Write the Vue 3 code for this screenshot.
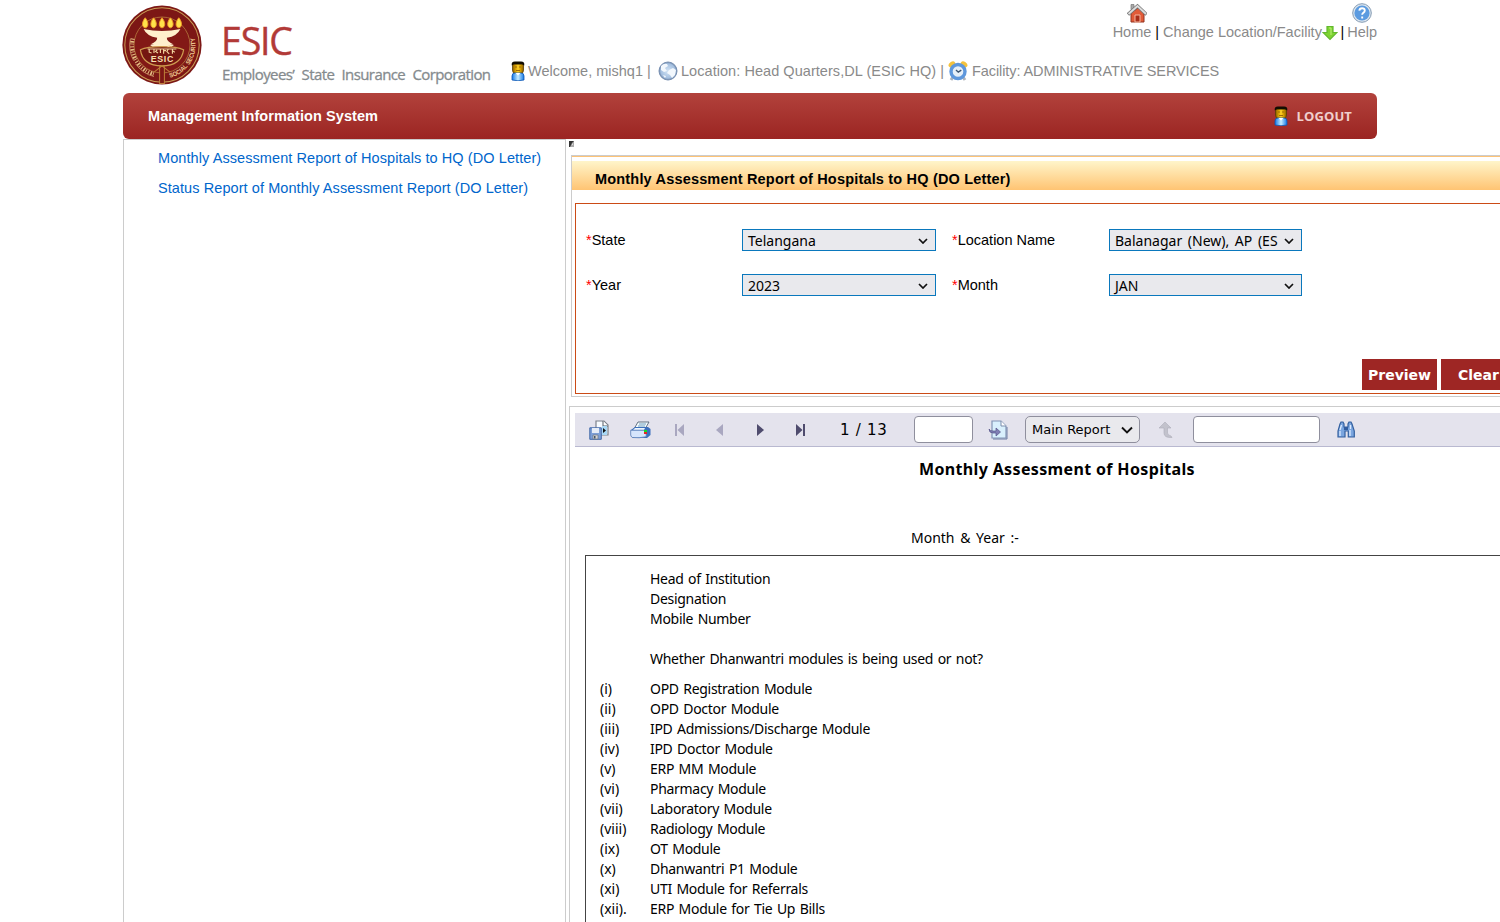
<script setup>
const links = [
  'Monthly Assessment Report of Hospitals to HQ (DO Letter)',
  'Status Report of Monthly Assessment Report (DO Letter)'
]
const fields = [
  { label: 'State', value: 'Telangana' },
  { label: 'Location Name', value: 'Balanagar (New), AP (ES' },
  { label: 'Year', value: '2023' },
  { label: 'Month', value: 'JAN' }
]
const heads = ['Head of Institution', 'Designation', 'Mobile Number']
const modules = [
  ['(i)', 'OPD Registration Module'],
  ['(ii)', 'OPD Doctor Module'],
  ['(iii)', 'IPD Admissions/Discharge Module'],
  ['(iv)', 'IPD Doctor Module'],
  ['(v)', 'ERP MM Module'],
  ['(vi)', 'Pharmacy Module'],
  ['(vii)', 'Laboratory Module'],
  ['(viii)', 'Radiology Module'],
  ['(ix)', 'OT Module'],
  ['(x)', 'Dhanwantri P1 Module'],
  ['(xi)', 'UTI Module for Referrals'],
  ['(xii).', 'ERP Module for Tie Up Bills']
]
const flames = [29, 39.5, 50, 60.5, 71]
</script>

<template>
  <div class="page">
    <svg class="defs" width="0" height="0" aria-hidden="true">
      <defs>
        <linearGradient id="skin" x1="0" x2="1"><stop offset="0" stop-color="#8a5d00" /><stop offset=".3" stop-color="#dba400" /><stop offset=".5" stop-color="#ffd02a" /><stop offset=".7" stop-color="#dba400" /><stop offset="1" stop-color="#8a5d00" /></linearGradient>
        <linearGradient id="shirt" x1="0" x2="1"><stop offset="0" stop-color="#1478e6" /><stop offset=".5" stop-color="#c4ecff" /><stop offset="1" stop-color="#1478e6" /></linearGradient>
        <radialGradient id="globe"><stop offset="0" stop-color="#d3e4f5" /><stop offset=".8" stop-color="#a5c0e0" /><stop offset="1" stop-color="#6780a4" /></radialGradient>
        <symbol id="person" viewBox="0 0 14 20">
          <path d="M1.500 3h11v6q0 3.500-3 3.500h-5q-3 0-3-3.500z" fill="url(#skin)" stroke="#5c3f00" stroke-width=".8" />
          <path d="M.8 4.500Q0 .5 4 .4h6Q14 .5 13.200 4.500L11 3.300H3z" fill="#120d02" />
          <path d="M4 6h2M8 6h2M5 9.500h4" stroke="#94620a" stroke-width=".9" />
          <path d="M1 19v-4q0-3 3-3h6q3 0 3 3v4q-6 1.500-12 0z" fill="url(#shirt)" stroke="#0b55b4" stroke-width=".8" />
          <path d="M4.500 12h5L7 14.500z" fill="#fff" />
        </symbol>
      </defs>
    </svg>

    <header class="top">
      <svg class="logo" viewBox="0 0 100 100">
        <circle cx="50" cy="50" r="49.500" fill="#7c1715" />
        <circle cx="50" cy="50" r="46.500" fill="none" stroke="#c99c55" stroke-width="1.300" />
        <circle cx="50" cy="50" r="35" fill="#821916" stroke="#b67b3d" stroke-width="1" />
        <path v-for="x in flames" :key="x" :transform="`translate(${x} 16)`" d="M0 0C5 6 4 12 0 12.500C-4 12-5 6 0 0z" fill="#ffe24b" stroke="#ef9b22" stroke-width="1.200" />
        <path d="M27 30q23 5 46 0q-4 9-17 11q0 5 8 8h-28q8-3 8-8q-13-2-17-11z" fill="#fff0cc" />
        <path d="M35 50q15-5 30 0l-7 5h-16z" fill="#fff0cc" />
        <path d="M23 56q8-4 27-4t27 4q-3 20-27 20q-24 0-27-20z" fill="#741611" stroke="#cf9c50" stroke-width="1.500" />
        <path d="M32 55h36M34 55v4l3 1M40 55v5M44 56l-2 2 3 2M48 55v5M52 55v6M52 57h3M58 55l-2 3 3 3M63 55v6M63 57l3 2M57 52l3-1" stroke="#f3d6a0" stroke-width="1.400" fill="none" />
        <text x="50.500" y="71" class="logo-name">ESIC</text>
        <path d="M47 77h6v21h-6z" fill="#7c1715" stroke="#bd7e39" stroke-width="1.300" />
        <path d="M40 84l10-8 10 8" fill="none" stroke="#bd7e39" stroke-width="1.300" />
        <path id="ring" d="M60 91A42 42 0 0 0 90 38" fill="none" />
        <text class="logo-ring"><textPath href="#ring" textLength="65" lengthAdjust="spacingAndGlyphs">SOCIAL SECURITY</textPath></text>
        <path d="M10.500 42A40.500 40.500 0 0 0 40 89.500" fill="none" stroke="#e3bd82" stroke-width=".8" stroke-dasharray="28 5 40" />
        <path d="M13.500 42A37.500 37.500 0 0 0 40 86.500" fill="none" stroke="#e3bd82" stroke-width="5" stroke-dasharray="1.300 1.900 2 1.300 1 2.300" />
      </svg>
      <div class="brand">
        <div class="brand-name">ESIC</div>
        <div class="brand-sub"><span>Employees’ State Insurance Corporation</span></div>
      </div>
      <div class="session">
        <svg class="i-person"><use href="#person" /></svg>
        <span class="s1">Welcome, mishq1 |</span>
        <svg class="i20" viewBox="0 0 20 20">
          <circle cx="10" cy="10" r="9" fill="url(#globe)" stroke="#7890b2" />
          <path d="M3 5q3-3 6-2l1 2-3 2 2 3-3 1-3-2zM11 9l4-2 3 2-1 5-3 3-2-3-3-2zM5 14l3 1-1 2z" fill="#f3f8fd" />
        </svg>
        <span class="s2">Location: Head Quarters,DL (ESIC HQ) |</span>
        <svg class="i20" viewBox="0 0 20 20">
          <path d="M5 16l-2 3M15 16l2 3" stroke="#aeb3bb" stroke-width="3" />
          <ellipse cx="4" cy="3.500" rx="3.700" ry="2.700" transform="rotate(-35 4 3.500)" fill="#f4c23d" />
          <ellipse cx="16" cy="3.500" rx="3.700" ry="2.700" transform="rotate(35 16 3.500)" fill="#f4c23d" />
          <circle cx="10" cy="10.500" r="7" fill="#e6eff8" stroke="#5e97dc" stroke-width="3.400" />
          <path d="M8 9l2.300 2.200 3-2" fill="none" stroke="#3d5470" stroke-width="1.400" />
        </svg>
        <span class="s3">Facility: ADMINISTRATIVE SERVICES</span>
      </div>
      <nav class="quick">
        <a class="q-home">
          <svg class="i20" viewBox="0 0 20 20">
            <path d="M4 10v9h13v-9l-6-5z" fill="#e15b38" stroke="#933520" />
            <path d="M4 1.500h3v5H4z" fill="#aaa" stroke="#777" stroke-width=".7" />
            <path d="M1 11.500L10.500 3 19.500 11.500" fill="none" stroke="#777" stroke-width="3.400" />
            <path d="M1.500 11L10.500 3 19 11" fill="none" stroke="#ddd" stroke-width="1.800" />
            <path d="M8 12h5v7H8z" fill="#a82d18" stroke="#f6b69e" />
          </svg>
          <span>Home</span>
        </a>
        <b>|</b>
        <a>Change Location/Facility</a>
        <svg class="i-down" viewBox="0 0 16 16"><path d="M5 1.500h6v6h4L8 14.500 1 7.500h4z" fill="#7ed332" stroke="#62b82e" stroke-width="1.200" /><path d="M7 3h2v7" fill="none" stroke="#baf078" /></svg>
        <b class="last">|</b>
        <a class="q-help">
          <svg class="i20" viewBox="0 0 20 20"><circle cx="10" cy="10" r="9.300" fill="#dbe5ee" stroke="#849bb3" /><circle cx="10" cy="10" r="7.600" fill="#5b9be0" /><path d="M7.300 7.700q.2-2.500 2.800-2.500t2.700 2.300q0 1.500-1.500 2.300-1.100.7-1.100 2M10.200 13.500v2" fill="none" stroke="#fff" stroke-width="1.900" /></svg>
          <span>Help</span>
        </a>
      </nav>
    </header>

    <div class="bar">
      <span class="bar-title">Management Information System</span>
      <span class="logout"><svg class="i-person"><use href="#person" /></svg><span>LOGOUT</span></span>
    </div>

    <div class="main">
      <aside class="side"><a v-for="l in links" :key="l">{{ l }}</a></aside>
      <section class="content">
        <svg class="mark" width="5" height="6" viewBox="0 0 5 6"><path d="M0 0h5v6H0z" fill="#aaa" /><path d="M0 0h5L3 2 1 6H0z" fill="#333" /><path d="M4 2v2H3z" fill="#eee" /></svg>
        <div class="panel">
          <h1><span>Monthly Assessment Report of Hospitals to HQ (DO Letter)</span></h1>
          <div class="form">
            <div class="grid">
              <template v-for="f in fields" :key="f.label">
                <label><i>*</i>{{ f.label }}</label>
                <div class="select"><span>{{ f.value }}</span><svg viewBox="0 0 10 6" width="10" height="6"><path d="M1 1l4 4 4-4" fill="none" stroke="#111" stroke-width="1.700" /></svg></div>
              </template>
            </div>
            <div class="actions"><button class="preview">Preview</button><button class="clear">Clear</button></div>
          </div>
        </div>

        <div class="report">
          <div class="toolbar">
            <svg class="t-save" viewBox="0 0 20 20" width="20" height="20">
              <path d="M7 1h8l4 4v10H7z" fill="#f7fbff" stroke="#7d828b" stroke-width="1.200" /><path d="M14 1v5h5" fill="#fff" stroke="#555c66" /><path d="M13 6h5v9h-5z" fill="#a9d8f5" /><path d="M14 8l3 2.500-3 2.500z" fill="#111" />
              <path d="M.8 7.800h11.500v11.500H.8z" fill="#7d9fd6" stroke="#4269a8" /><path d="M3 8h7v5H3z" fill="#e5ecf7" /><path d="M4 15h5v4H4z" fill="#d5d5d5" stroke="#6c7684" stroke-width=".7" /><path d="M5 16h1.500v2.500H5z" fill="#456" />
            </svg>
            <svg class="t-print" viewBox="0 0 21 18" width="21" height="18">
              <path d="M8 1h11l-4 7H4z" fill="#f4fbff" stroke="#536475" stroke-width=".9" /><path d="M9 3h7M8 5h7" stroke="#6e9fbd" />
              <path d="M1 9l4-3h13l2.500 2v6L17 17H3l-2-2z" fill="#3c70bd" /><path d="M5 7h10l-1 2H3z" fill="#eef6ff" /><path d="M.7 9.200h15.500v6.500q-7 1.700-14 .8Q.7 15 .7 14z" fill="#d6e5fc" stroke="#557bb5" stroke-width=".8" /><path d="M14 9h3v2h-3z" fill="#16d92c" /><path d="M14 11h3v2h-3z" fill="#e62525" />
            </svg>
            <svg class="t-first" viewBox="0 0 9 12" width="9" height="12"><path d="M0 0h2v12H0zM9 0v12L2.500 6z" fill="#a9a7c0" /></svg>
            <svg class="t-prev" viewBox="0 0 7 12" width="7" height="12"><path d="M7 0v12L0 6z" fill="#a9a7c0" /></svg>
            <svg class="t-next" viewBox="0 0 7 12" width="7" height="12"><path d="M0 0l7 6-7 6z" fill="#4f4c6e" /></svg>
            <svg class="t-last" viewBox="0 0 9 12" width="9" height="12"><path d="M0 0l6.500 6L0 12zM7 0h2v12H7z" fill="#4f4c6e" /></svg>
            <span class="pages">1 / 13</span>
            <span class="box page-box"></span>
            <svg class="t-go" viewBox="0 0 20 20" width="20" height="20"><path d="M4 1h9l5 5v12H4z" fill="#d9f0fd" stroke="#8294b5" stroke-width="1.200" /><path d="M13 1v5h5" fill="#fff" stroke="#7b8cab" /><path d="M5 19h14V7" fill="none" stroke="#6d7fa5" /><path d="M1 9q1 2 4 2h3V8l4.500 4L8 16v-3H5Q1 13 1 9z" fill="#807fb5" stroke="#555387" stroke-width=".7" /></svg>
            <span class="box group">Main Report<svg viewBox="0 0 12 8" width="12" height="8"><path d="M1 1.500l5 5 5-5" fill="none" stroke="#111" stroke-width="1.900" /></svg></span>
            <svg class="t-up" viewBox="0 0 14 16" width="14" height="16"><path d="M6 0l6 6H8.500v5q0 2 3.500 3l1 1.500Q5 16 5 11V6H0z" fill="#c2c2cc" stroke="#acacb9" stroke-width=".6" /></svg>
            <span class="box search-box"></span>
            <svg class="t-find" viewBox="0 0 18 17" width="18" height="17"><path d="M3 3l1-2h2l1 2v3h4V3l1-2h2l1 2 2.300 7v6h-6v-6H8v6H1v-6z" fill="#7aa5df" stroke="#34609f" stroke-width="1.200" /><path d="M3 10v5M4.500 4L3 9M13 9v6M13.500 4v4" stroke="#dbeaff" stroke-width="1.300" /><path d="M7 6h4v3H7z" fill="#315c9e" /></svg>
          </div>
          <h2><span>Monthly Assessment of Hospitals</span></h2>
          <p class="period">Month &amp; Year :-</p>
          <div class="sheet">
            <div v-for="h in heads" :key="h" class="row"><span></span><span class="item">{{ h }}</span></div>
            <div class="row ask"><span></span><span class="item">Whether Dhanwantri modules is being used or not?</span></div>
            <div v-for="m in modules" :key="m[0]" class="row"><span>{{ m[0] }}</span><span class="item">{{ m[1] }}</span></div>
          </div>
        </div>
      </section>
    </div>
  </div>
</template>

<style>
html, body { margin: 0; background: #fff; overflow: hidden; }
</style>

<style scoped>
* { box-sizing: border-box; }
.page { width: 1500px; height: 922px; overflow: hidden; font: 14.5px/20px "Liberation Sans", Arial, sans-serif; color: #000; padding-left: 123px; }
.defs { position: absolute; }
svg { display: block; flex: none; }
.top { position: relative; width: 1254px; height: 93px; display: flex; align-items: flex-start; white-space: nowrap; color: #8a8a8a; }
.logo { width: 80px; height: 80px; margin: 5px 0 0 -1px; }
.logo-name { font: bold 11px "Liberation Sans", sans-serif; fill: #f7dfae; text-anchor: middle; letter-spacing: .8px; }
.logo-ring { font: bold 8px "Liberation Sans", sans-serif; fill: #edc790; }
.brand { width: 290px; margin: 16px 0 0 19px; font-family: "Open Sans", sans-serif; }
.brand-name { font-size: 37.5px; line-height: 49px; color: #b23a37; letter-spacing: -1.2px; -webkit-text-stroke: .4px #b23a37; }
.brand-sub { font-size: 15px; line-height: 18px; color: #858b8e; letter-spacing: -.6px; word-spacing: 4px; padding-left: 1px; -webkit-text-stroke: .3px #858b8e; }
.session { display: flex; align-items: center; margin-top: 61px; height: 20px; }
.i-person { width: 14px; height: 20px; }
.i20 { width: 20px; height: 20px; }
.s1 { width: 133px; padding-left: 3px; }
.s2 { width: 270px; padding-left: 3px; letter-spacing: .05px; }
.s3 { padding-left: 4px; letter-spacing: -.09px; }
.quick { position: absolute; right: 0; top: 2px; height: 40px; display: flex; align-items: flex-end; }
.quick a { color: #8a8a8a; }
.quick b { font-weight: 400; color: #000; padding: 0 4px; }
.quick .last { padding: 0 3px 0 2.500px; }
.q-home, .q-help { display: flex; flex-direction: column; align-items: center; }
.q-home .i20 { margin-left: 10px; }
.q-home .i20, .q-help .i20 { transform: translateY(1px); }
.i-down { width: 16px; height: 16px; margin-bottom: 1px; }
.bar { width: 1254px; height: 46px; border-radius: 6px; background: linear-gradient(#b2423c, #9b2522); color: #fff; display: flex; justify-content: space-between; padding: 0 25px; line-height: 46px; }
.bar-title { font-weight: bold; letter-spacing: .07px; }
.logout { display: flex; align-items: center; gap: 9px; font: 700 13px "Open Sans", sans-serif; color: #f0cfcd; letter-spacing: .1px; }
.main { display: flex; height: 783px; }
.side { width: 443px; border: solid #ccc; border-width: 1px 1px 0; padding: 8px 0 0 34px; display: flex; flex-direction: column; gap: 10px; flex: none; }
.side a { color: #0066cc; white-space: nowrap; letter-spacing: .08px; }
.content { width: 1000px; flex: none; padding-top: 2px; }
.mark { margin-left: 3px; }
.panel { margin: 8px 0 0 5px; height: 242px; border: 1px solid #ccc; padding-right: 3px; }
h1 { margin: 0 -3px 0 0; height: 34px; border-top: 1px solid #fdc377; padding: 12px 0 0 23px; font-size: 14.5px; line-height: 20px; letter-spacing: .18px; background: linear-gradient(#fff5ca, #ffc473) 0 4px / 100% 29px no-repeat; }
.form { margin: 13px 0 0 3px; height: 191px; border: 1px solid #cb4b16; padding: 25px 0 0 10px; }
.grid { display: grid; grid-template-columns: 156px 210px 157px 193px; row-gap: 23px; height: 130px; align-content: start; }
label { line-height: 22px; }
label i { color: #f00; font-style: normal; }
.select { max-width: 194px; height: 22px; border: 1px solid #0a78bd; background: #e9e9ed; display: flex; align-items: center; justify-content: space-between; padding: 1px 7px 0 5px; font: 14px/20px "Noto Sans", sans-serif; word-spacing: 2px; white-space: nowrap; }
.grid .select:nth-child(4n + 2) { width: 194px; }
.actions { display: flex; gap: 4px; margin-left: 776px; }
button { height: 31px; border: 0; padding: 0; width: 75px; color: #fff; background: #9e2624; font: bold 14px "DejaVu Sans", sans-serif; }
.report { margin: 9px 0 0 3px; height: 520px; border: solid #ccc; border-width: 1px 0 0 1px; padding: 6px 0 0 5px; font-family: "Noto Sans", sans-serif; font-size: 14px; }
.toolbar { height: 34px; border-bottom: 1px solid #b9b9d0; background: #e4e3ed; display: flex; align-items: center; padding-left: 14px; font-family: "DejaVu Sans", sans-serif; }
.t-print { margin-left: 21px; }
.t-first { margin-left: 24px; }
.t-prev { margin-left: 32px; }
.t-next { margin-left: 34px; }
.t-last { margin-left: 32px; }
.pages { width: 74px; margin-left: 35px; font-size: 15px; letter-spacing: .7px; }
.box { height: 27px; background: #fff; border: 1px solid #8f8f9d; border-radius: 4px; }
.page-box { width: 59px; }
.t-go { margin-left: 15px; }
.group { width: 115px; margin-left: 17px; background: #e9e9ed; border-radius: 5px; display: flex; align-items: center; justify-content: space-between; padding: 0 6px; font-size: 13px; }
.t-up { margin-left: 19px; }
.search-box { width: 127px; margin-left: 20px; }
.t-find { margin-left: 17px; }
h2 { margin: 11px 0 0 344px; font: bold 16px/22px "Noto Sans", sans-serif; letter-spacing: .35px; }
.period { margin: 48px 0 0 336px; line-height: 20px; word-spacing: 2px; }
.sheet { margin: 7px 0 0 10px; border: solid #444; border-width: 1px 0 0 1px; height: 400px; padding: 13px 0 0 14px; }
.row { display: grid; grid-template-columns: 50px 500px; height: 20px; line-height: 20px; white-space: nowrap; }
.item { letter-spacing: -.3px; word-spacing: 1.200px; }
.ask { margin: 20px 0 10px; }
</style>
